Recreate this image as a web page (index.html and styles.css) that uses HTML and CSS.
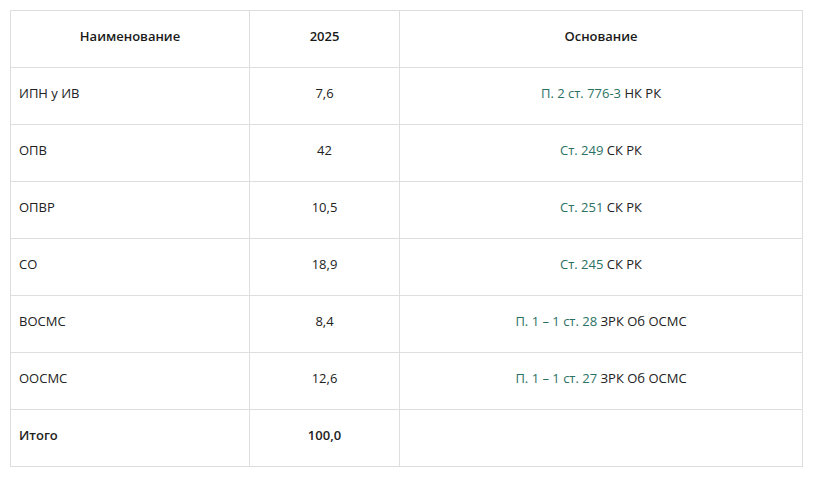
FILE: index.html
```html
<!DOCTYPE html>
<html lang="ru">
<head>
<meta charset="utf-8">
<link rel="stylesheet" href="styles.css">
</head>
<body>
<table class="tbl">
  <colgroup>
    <col class="c1"><col class="c2"><col class="c3">
  </colgroup>
  <thead>
    <tr><th>Наименование</th><th>2025</th><th>Основание</th></tr>
  </thead>
  <tbody>
    <tr><td class="name">ИПН у ИВ</td><td>7,6</td><td><a class="lnk">П. 2 ст. 776-3</a> НК РК</td></tr>
    <tr><td class="name">ОПВ</td><td>42</td><td><a class="lnk">Ст. 249</a> СК РК</td></tr>
    <tr><td class="name">ОПВР</td><td>10,5</td><td><a class="lnk">Ст. 251</a> СК РК</td></tr>
    <tr><td class="name">СО</td><td>18,9</td><td><a class="lnk">Ст. 245</a> СК РК</td></tr>
    <tr><td class="name">ВОСМС</td><td>8,4</td><td><a class="lnk">П. 1 – 1 ст. 28</a> ЗРК Об ОСМС</td></tr>
    <tr><td class="name">ООСМС</td><td>12,6</td><td><a class="lnk">П. 1 – 1 ст. 27</a> ЗРК Об ОСМС</td></tr>
    <tr class="total"><td class="name">Итого</td><td>100,0</td><td></td></tr>
  </tbody>
</table>
</body>
</html>
```
FILE: styles.css
```css
html, body { margin: 0; padding: 0; background: #fff; }
body { padding: 10px 0 0 10px; font-family: "Open Sans", "Liberation Sans", sans-serif; color: #222; }
.tbl { border-collapse: collapse; width: 792px; table-layout: fixed; font-size: 13px; }
.c1 { width: 239px; }
.c2 { width: 150px; }
.c3 { width: 403px; }
.tbl th, .tbl td { border: 1px solid #dedede; height: 50px; padding: 0 8px 6px; text-align: center; vertical-align: middle; }
.tbl th { font-weight: 600; color: #1a1a1a; }
.tbl td.name { text-align: left; }
.total td { font-weight: 600; }
.lnk { color: #2b7264; text-decoration: none; }
```
